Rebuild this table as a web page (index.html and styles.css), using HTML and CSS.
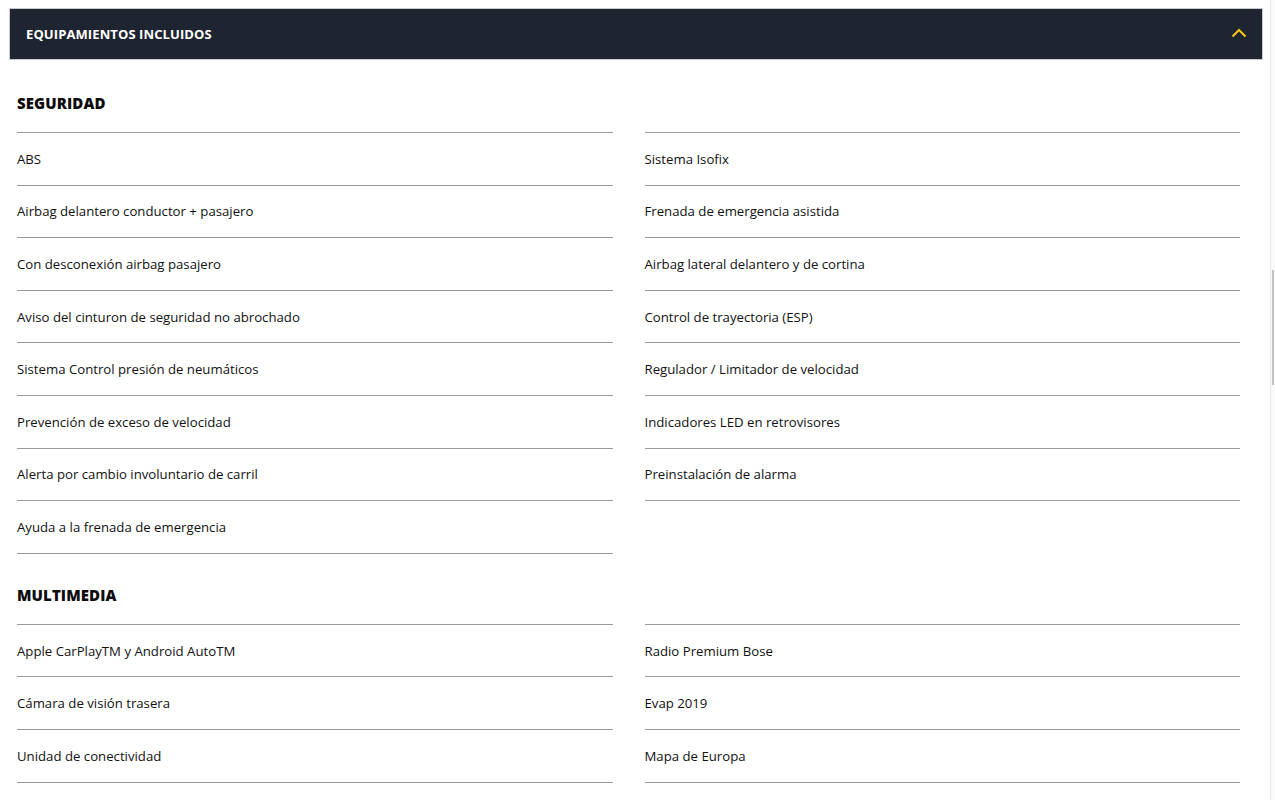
FILE: index.html
```html
<!DOCTYPE html>
<html lang="es">
<head>
<meta charset="utf-8">
<title>Equipamientos incluidos</title>
<link rel="stylesheet" href="styles.css">
</head>
<body>
<div class="accordion">
  <button class="accordion-header" type="button">
    <span class="accordion-title">EQUIPAMIENTOS INCLUIDOS</span>
    <svg class="chevron" width="16" height="10" viewBox="0 0 16 10" aria-hidden="true">
      <path d="M1.5 8.5 L8 2 L14.5 8.5" fill="none" stroke="#f5c518" stroke-width="2"/>
    </svg>
  </button>
  <div class="accordion-body">
    <section class="group">
      <h2 class="group-title">SEGURIDAD</h2>
      <div class="columns">
        <ul class="list">
          <li>ABS</li>
          <li>Airbag delantero conductor + pasajero</li>
          <li>Con desconexión airbag pasajero</li>
          <li>Aviso del cinturon de seguridad no abrochado</li>
          <li>Sistema Control presión de neumáticos</li>
          <li>Prevención de exceso de velocidad</li>
          <li>Alerta por cambio involuntario de carril</li>
          <li>Ayuda a la frenada de emergencia</li>
        </ul>
        <ul class="list">
          <li>Sistema Isofix</li>
          <li>Frenada de emergencia asistida</li>
          <li>Airbag lateral delantero y de cortina</li>
          <li>Control de trayectoria (ESP)</li>
          <li>Regulador / Limitador de velocidad</li>
          <li>Indicadores LED en retrovisores</li>
          <li>Preinstalación de alarma</li>
        </ul>
      </div>
    </section>
    <section class="group">
      <h2 class="group-title">MULTIMEDIA</h2>
      <div class="columns">
        <ul class="list">
          <li>Apple CarPlayTM y Android AutoTM</li>
          <li>Cámara de visión trasera</li>
          <li>Unidad de conectividad</li>
        </ul>
        <ul class="list">
          <li>Radio Premium Bose</li>
          <li>Evap 2019</li>
          <li>Mapa de Europa</li>
        </ul>
      </div>
    </section>
  </div>
</div>
<div class="scrollbar"><div class="scrollbar-thumb"></div></div>
</body>
</html>
```
FILE: styles.css
```css
html, body {
  background: #ffffff;
}
body {
  margin: 8px 12px 8px 9px;
  font-family: "Open Sans", "Liberation Sans", sans-serif;
  color: #111111;
  overflow: hidden;
}
.accordion-header {
  display: flex;
  align-items: center;
  justify-content: space-between;
  width: 100%;
  height: 52px;
  margin: 0;
  padding: 0 15px 0 16px;
  box-sizing: border-box;
  background: #1f2431;
  border: 1px solid #c9cbd0;
  color: #ffffff;
  font-family: inherit;
  cursor: pointer;
}
.accordion-title {
  font-size: 13px;
  font-weight: 700;
  letter-spacing: 0.1px;
}
.chevron {
  display: block;
  margin-top: -2px;
}
.accordion-body {
  padding: 2px 23px 0 8px;
}
.group {
  padding-top: 31px;
}
.group-title {
  margin: 0 0 19px;
  font-size: 15px;
  line-height: 20px;
  font-weight: 800;
  color: #0d0d0d;
  letter-spacing: 0.1px;
}
.columns {
  display: grid;
  grid-template-columns: 1fr 1fr;
  column-gap: 32px;
}
.list {
  list-style: none;
  margin: 0;
  padding: 0;
  border-top: 1px solid #9a9a9a;
}
.list li {
  padding: 15.8px 0;
  font-size: 13.2px;
  line-height: 20px;
  font-weight: 500;
  border-bottom: 1px solid #9a9a9a;
  color: #111111;
}
.scrollbar {
  position: fixed;
  top: 0;
  right: 0;
  width: 4px;
  height: 100%;
  border-left: 1px solid #e6e6e6;
  background: #fafafa;
}
.scrollbar-thumb {
  position: absolute;
  top: 270px;
  left: 1px;
  width: 2px;
  height: 115px;
  background: #c4c4c4;
}
```
